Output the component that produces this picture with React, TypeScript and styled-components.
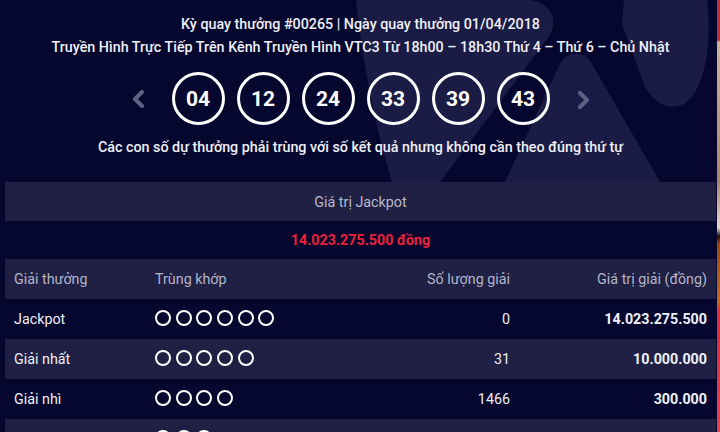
import React from 'react';
import styled, { createGlobalStyle } from 'styled-components';

const GlobalStyle = createGlobalStyle`
  html, body {
    margin: 0;
    padding: 0;
    background: #06072e;
    overflow: hidden;
  }
  body {
    font-family: Roboto, 'Noto Sans', 'Liberation Sans', sans-serif;
    color: #ecedf5;
  }
`;

const Page = styled.div`
  display: flex;
  width: 720px;
  min-height: 432px;
`;

const Main = styled.div`
  position: relative;
  flex: 1;
  padding: 0 1px 0 5px;
  background: #06072e;
  overflow: hidden;
`;

const Strip = styled.div`
  width: 3px;
  background: linear-gradient(
    to bottom,
    #b8323a 0,
    #b8323a 40px,
    #d1b29c 42px,
    #a8866e 180px,
    #e4d6cc 228px,
    #1a1010 236px,
    #9a4a18 244px,
    #c36a26 300px,
    #e02a3e 312px,
    #e64352 432px
  );
`;

const Watermark = styled.svg`
  position: absolute;
  left: 0;
  top: 0;
  width: 716px;
  height: 182px;
  pointer-events: none;
`;

const Hero = styled.div`
  position: relative;
  display: flex;
  flex-direction: column;
  align-items: center;
  padding-top: 13px;
  height: 182px;
  box-sizing: border-box;
`;

const InfoLine = styled.div`
  font-size: 14.3px;
  font-weight: 500;
  line-height: 23px;
  color: #eeeff6;
  white-space: nowrap;
`;

const BallRow = styled.div`
  display: flex;
  align-items: center;
  gap: 12px;
  margin-top: 13px;
`;

const Arrow = styled.button<{ $side: 'left' | 'right' }>`
  display: flex;
  align-items: center;
  justify-content: center;
  width: 16px;
  height: 20px;
  padding: 0;
  border: 0;
  background: none;
  margin: ${(p) => (p.$side === 'left' ? '0 14px 0 0' : '2px 0 0 14px')};
`;

const Ball = styled.div`
  width: 53px;
  height: 53px;
  box-sizing: border-box;
  border: 3px solid #ffffff;
  border-radius: 50%;
  display: flex;
  align-items: center;
  justify-content: center;
  font-size: 21px;
  font-weight: 700;
  color: #ffffff;
`;

const Caption = styled.div`
  margin-top: 11px;
  font-size: 14.3px;
  font-weight: 500;
  line-height: 22px;
  color: #eeeff6;
  white-space: nowrap;
`;

const JackpotBar = styled.div`
  position: relative;
  height: 39px;
  background: #1f2043;
  display: flex;
  align-items: center;
  justify-content: center;
  font-size: 14.3px;
  color: #b9bacb;
`;

const JackpotAmount = styled.div`
  height: 38px;
  display: flex;
  align-items: center;
  justify-content: center;
  font-size: 14.3px;
  font-weight: 700;
  color: #ea2139;
`;

const Row = styled.div<{ $striped?: boolean; $head?: boolean }>`
  display: grid;
  grid-template-columns: 141px 1fr 150px 197px;
  align-items: center;
  height: 40px;
  padding: 0 9px;
  font-size: 14.3px;
  background: ${(p) => (p.$striped ? '#1f2043' : 'transparent')};
  color: ${(p) => (p.$head ? '#b3b5c8' : '#eeeff6')};
`;

const Cell = styled.div<{ $right?: boolean; $bold?: boolean }>`
  text-align: ${(p) => (p.$right ? 'right' : 'left')};
  font-weight: ${(p) => (p.$bold ? 700 : 400)};
  white-space: nowrap;
`;

const Dots = styled.div`
  display: flex;
  gap: 4.7px;
  margin-top: -3px;
`;

const Dot = styled.span`
  width: 16px;
  height: 16px;
  box-sizing: border-box;
  border: 2px solid #ffffff;
  border-radius: 50%;
`;

const Chevron = ({ dir }: { dir: 'left' | 'right' }) => (
  <svg width="14" height="18" viewBox="0 0 14 18">
    <polyline
      points={dir === 'left' ? '11,2 4,9 11,16' : '3,2 10,9 3,16'}
      fill="none"
      stroke="#5e6183"
      strokeWidth="4"
      strokeLinecap="round"
      strokeLinejoin="round"
    />
  </svg>
);

const numbers = ['04', '12', '24', '33', '39', '43'];

const prizes = [
  { name: 'Jackpot', match: 6, count: '0', value: '14.023.275.500' },
  { name: 'Giải nhất', match: 5, count: '31', value: '10.000.000' },
  { name: 'Giải nhì', match: 4, count: '1466', value: '300.000' },
  { name: 'Giải ba', match: 3, count: '24587', value: '30.000' },
];

function App() {
  return (
    <Page>
      <GlobalStyle />
      <Main>
        <Watermark viewBox="0 0 716 182">
          <g fill="#1b1c45">
            <path d="M356,0 L527,0 C550,0 560,20 548,38 L440,182 L392,182 C376,130 362,60 356,0 Z" />
            <path d="M560,64 C568,50 584,50 592,64 L660,182 L505,182 Z" />
            <path d="M624,0 L707,0 C712,40 706,90 684,104 C668,112 652,102 644,84 L622,24 Z" />
          </g>
        </Watermark>
        <Hero>
          <InfoLine>Kỳ quay thưởng #00265 | Ngày quay thưởng 01/04/2018</InfoLine>
          <InfoLine>
            Truyền Hình Trực Tiếp Trên Kênh Truyền Hình VTC3 Từ 18h00 – 18h30 Thứ 4 – Thứ 6 – Chủ Nhật
          </InfoLine>
          <BallRow>
            <Arrow $side="left">
              <Chevron dir="left" />
            </Arrow>
            {numbers.map((n) => (
              <Ball key={n}>{n}</Ball>
            ))}
            <Arrow $side="right">
              <Chevron dir="right" />
            </Arrow>
          </BallRow>
          <Caption>Các con số dự thưởng phải trùng với số kết quả nhưng không cần theo đúng thứ tự</Caption>
        </Hero>
        <JackpotBar>Giá trị Jackpot</JackpotBar>
        <JackpotAmount>14.023.275.500 đồng</JackpotAmount>
        <Row $striped $head>
          <Cell>Giải thưởng</Cell>
          <Cell>Trùng khớp</Cell>
          <Cell $right>Số lượng giải</Cell>
          <Cell $right>Giá trị giải (đồng)</Cell>
        </Row>
        {prizes.map((p, i) => (
          <Row key={p.name} $striped={i % 2 === 1}>
            <Cell>{p.name}</Cell>
            <Dots>
              {Array.from({ length: p.match }).map((_, k) => (
                <Dot key={k} />
              ))}
            </Dots>
            <Cell $right>{p.count}</Cell>
            <Cell $right $bold>
              {p.value}
            </Cell>
          </Row>
        ))}
      </Main>
      <Strip />
    </Page>
  );
}

export default App;
